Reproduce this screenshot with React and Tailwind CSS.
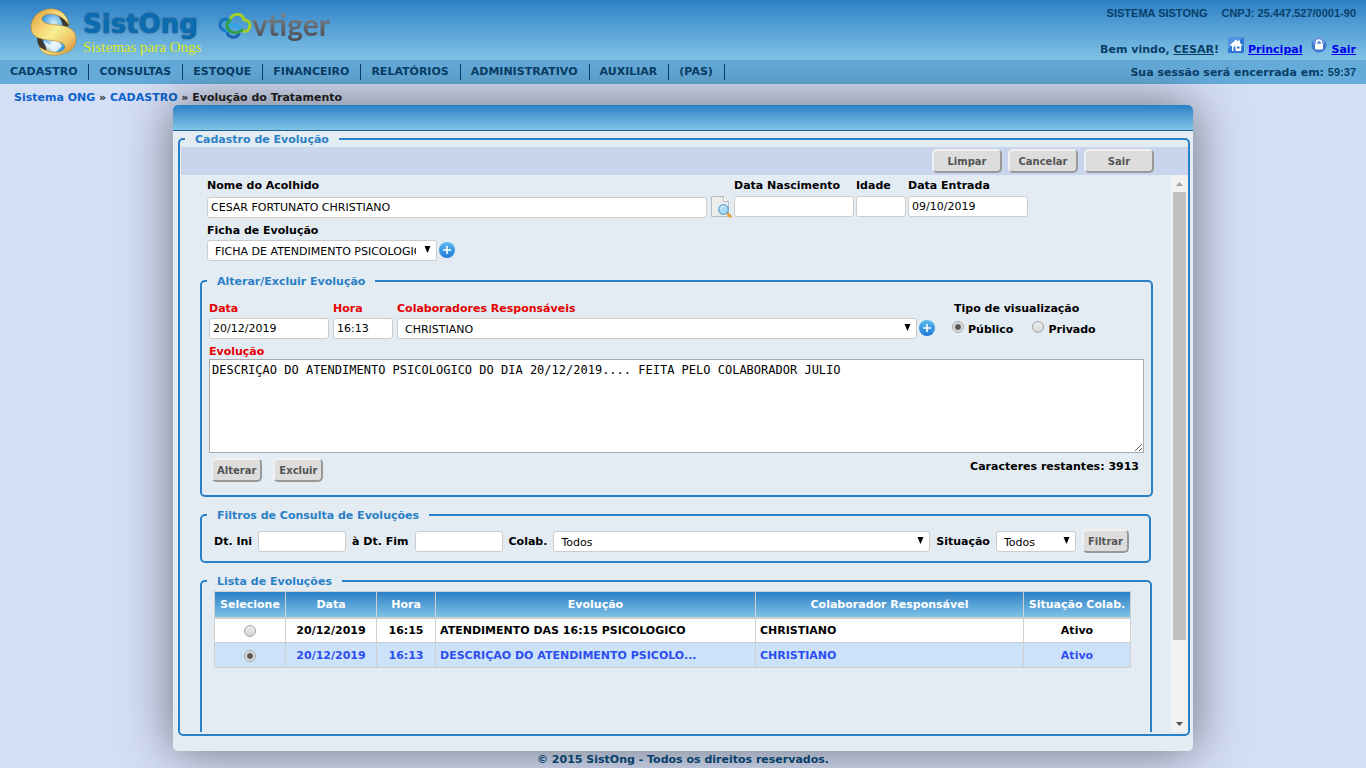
import { useState } from "react";

const MENU = [
  "CADASTRO",
  "CONSULTAS",
  "ESTOQUE",
  "FINANCEIRO",
  "RELATÓRIOS",
  "ADMINISTRATIVO",
  "AUXILIAR",
  "(PAS)",
];

const EVOLUCOES = [
  { id: 1, data: "20/12/2019", hora: "16:15", texto: "ATENDIMENTO DAS 16:15 PSICOLOGICO", colab: "CHRISTIANO", situacao: "Ativo" },
  { id: 2, data: "20/12/2019", hora: "16:13", texto: "DESCRIÇAO DO ATENDIMENTO PSICOLO...", colab: "CHRISTIANO", situacao: "Ativo" },
];

const MAX_CARACTERES = 4000;

const FIELD = "block h-[21px] rounded-[3px] border border-[#ccc] bg-white font-normal text-black outline-none";
const RADIO =
  "block size-3 shrink-0 appearance-none rounded-full border border-[#a5a5a5] bg-linear-to-b from-[#eee] to-[#d6d6d6] checked:bg-[radial-gradient(circle,#555_0,#555_2px,#e6e6e6_4px)]";

function Globe() {
  return (
    <svg className="mt-1" width="48" height="48" viewBox="0 0 48 48" aria-hidden="true">
      <defs>
        <linearGradient id="gold" x1="0" y1="0" x2="1" y2="1">
          <stop offset="0" stopColor="#d99a35" />
          <stop offset=".3" stopColor="#f3cf6c" />
          <stop offset=".5" stopColor="#f8ee93" />
          <stop offset=".75" stopColor="#efc765" />
          <stop offset="1" stopColor="#c98228" />
        </linearGradient>
        <radialGradient id="globe">
          <stop offset="0" stopColor="#d4eefc" />
          <stop offset="1" stopColor="#2c8fd8" />
        </radialGradient>
      </defs>
      <circle cx="24" cy="15" r="13" fill="url(#globe)" />
      <circle cx="23" cy="34" r="13" fill="url(#globe)" />
      <path d="M28 3q10 3 11 15l-6 1q-1-9-8-14z" fill="#3b3733" />
      <path d="M7 30q0 11 11 15l4-3q-9-4-10-12z" fill="#3b3733" />
      <path d="M14 33l6 4 6-7 6 8-6 6-9-1z" fill="#fff" opacity=".75" />
      <path
        d="M39 17C37 4 27 0 18 1 6 3 1 12 1 19c0 9 7 12 17 13 11 1 17 3 17 7 0 6-12 8-26 0 5 11 20 9 29 5 6-3 8-8 8-13 0-10-8-13-19-14-10-1-15-2-15-6 0-6 17-9 27 6z"
        fill="url(#gold)"
        stroke="#b98226"
        strokeWidth=".6"
      />
    </svg>
  );
}

function Cloud() {
  return (
    <svg width="34" height="28" viewBox="0 0 34 28" fill="none" strokeWidth="3" strokeLinecap="round" aria-hidden="true">
      <path d="M12 8C6 5 2 9 2 13c0 4 4 6 7 6" stroke="#1673bd" />
      <path d="M9 19c0 7 9 8 12 3" stroke="#1d62b0" />
      <path d="M9 19c-1-5 5-8 10-5l5 4" stroke="#2ba7ea" />
      <path d="M12 8c2-7 12-8 14 0 6 0 7 5 5 9-2 3-5 3-7 1" stroke="#a5cf28" />
      <path d="M12 8c-4 3-4 9 0 11 4 3 9 2 12-1" stroke="#2fa04d" />
    </svg>
  );
}

function HomeIcon() {
  return (
    <svg width="16" height="16" viewBox="0 0 16 16" aria-hidden="true">
      <rect width="16" height="16" rx="1" fill="#2f78d2" />
      <path d="M0 0h16L0 12z" fill="#6ba5ea" opacity=".6" />
      <path d="M8 2.500 2 8l1 1 1-.5V14h9V8.500l1 .5.500-1L12 6V3.500h-2v1z" fill="#fff" />
      <path d="M5.500 9.500h2V14h-2zM9 9.500h2.500v2H9z" fill="#2f78d2" />
    </svg>
  );
}

function LockIcon() {
  return (
    <svg width="16" height="16" viewBox="0 0 16 16" aria-hidden="true">
      <circle cx="8" cy="8" r="7.500" fill="#3f73cf" />
      <ellipse cx="8" cy="5" rx="6" ry="4.500" fill="#7fa6e6" opacity=".7" />
      <path d="M5.500 8V5.500a2.500 2.500 0 0 1 5 0V8" fill="none" stroke="#fff" strokeWidth="1.500" />
      <rect x="4" y="7" width="8" height="5.500" rx=".8" fill="#fff" />
    </svg>
  );
}

function AddButton({ label }) {
  return (
    <button type="button" aria-label={label} className="mt-[2px] block size-4 shrink-0">
      <svg width="16" height="16" viewBox="0 0 16 16" aria-hidden="true">
        <defs>
          <linearGradient id="add" x1="0" y1="0" x2="0" y2="1">
            <stop offset="0" stopColor="#5bbcf0" />
            <stop offset="1" stopColor="#1f78d6" />
          </linearGradient>
        </defs>
        <circle cx="8" cy="8" r="8" fill="url(#add)" />
        <path d="M8 4v8M4 8h8" stroke="#fff" strokeWidth="1.600" />
      </svg>
    </button>
  );
}

function SearchDocIcon() {
  return (
    <svg width="21" height="22" viewBox="0 0 21 22" aria-hidden="true">
      <path d="M.5.5h12l5 5v15H.5z" fill="#eceded" stroke="#b9bcbe" />
      <path d="M12.500.5v5h5" fill="#fff" stroke="#b9bcbe" />
      <path d="m16 17 3.500 3.500" stroke="#e59a2e" strokeWidth="2.500" strokeLinecap="round" />
      <circle cx="12.500" cy="13.500" r="4.800" fill="#a5dcf8" stroke="#6fa6cc" strokeWidth="1.300" />
      <path d="M9.500 13a3 3 0 0 1 4-2.500" stroke="#fff" fill="none" />
    </svg>
  );
}

function Button({ className, children }) {
  return (
    <button
      type="button"
      className={`h-6 rounded-[5px] border-2 border-t-[#f0f0f0] border-r-[#999] border-b-[#999] border-l-[#f0f0f0] bg-[#ddd] text-[10px] font-bold text-[#555] ${className}`}
    >
      {children}
    </button>
  );
}

function Box({ title, className, children }) {
  return (
    <fieldset className={`min-w-0 rounded-[5px] border-2 border-[#2a80c6] ${className}`}>
      <legend className="ml-[5px] px-[10px] pt-[2px] leading-[14px] text-[#2a80c6]">{title}</legend>
      {children}
    </fieldset>
  );
}

function Select({ id, className, options }) {
  return (
    <div className={`relative ${className}`}>
      <select id={id} className={`${FIELD} w-full appearance-none pt-[3px] pr-5 pl-[7px]`}>
        {options.map((o) => (
          <option key={o}>{o}</option>
        ))}
      </select>
      <svg className="pointer-events-none absolute top-[6px] right-[6px]" width="7" height="7" viewBox="0 0 7 7" aria-hidden="true">
        <path d="M.5 0h6l-3 7z" fill="#000" />
      </svg>
    </div>
  );
}

function Header() {
  return (
    <header className="shrink-0 text-[#083f68]">
      <div className="flex h-[60px] justify-between bg-linear-to-b from-[#2a80c6] to-[#82c4e6] pr-[10px] pl-[30px]">
        <div className="flex">
          <div className="flex pt-1">
            <Globe />
            <div className="w-[121px] pt-1 pl-[5px] whitespace-nowrap">
              <div className="text-[26px] leading-8 text-[#0b6cb1] [text-shadow:0_0_2px_#123c60]">SistOng</div>
              <div className="font-['Liberation_Serif',serif] text-[15px] leading-[14px] font-normal text-[#dfe81c]">Sistemas para Ongs</div>
            </div>
          </div>
          <div className="ml-[19px] flex h-[52px] items-center">
            <Cloud />
            <span className="bg-linear-to-b from-[#8b9299] to-[#3f4449] bg-clip-text pb-1 font-['Lato',sans-serif] text-[30px] leading-9 text-transparent">vtiger</span>
          </div>
        </div>
        <div className="flex flex-col items-end justify-between pt-[6px] pb-[3px]">
          <div className="flex gap-[14px] font-['Liberation_Sans',Arial,sans-serif] leading-[14px]">
            <span>SISTEMA SISTONG</span>
            <span>CNPJ: 25.447.527/0001-90</span>
          </div>
          <div className="flex items-end leading-[14px]">
            <span>
              Bem vindo, <u>CESAR</u>!
            </span>
            <a href="#principal" className="ml-[9px] flex items-end gap-1 text-[#00e] underline">
              <span className="pb-1"><HomeIcon /></span>
              Principal
            </a>
            <a href="#sair" className="ml-[9px] flex items-end gap-1 text-[#00e] underline">
              <span className="pb-1"><LockIcon /></span>
              Sair
            </a>
          </div>
        </div>
      </div>
      <div className="flex h-6 items-center justify-between bg-[#64abda] pr-[10px]">
        <nav className="flex">
          {MENU.map((item) => (
            <a key={item} href="#menu" className="border-r border-[#083f68] pr-[11px] pl-[10px] leading-4">
              {item}
            </a>
          ))}
        </nav>
        <div className="leading-[14px]">
          Sua sessão será encerrada em: <span className="font-['Liberation_Sans',Arial,sans-serif]">59:37</span>
        </div>
      </div>
    </header>
  );
}

function DadosAcolhido() {
  return (
    <div className="pt-[3px] pl-[26px]">
      <div className="flex">
        <div className="w-[500px]">
          <label htmlFor="nome" className="block h-[19px] leading-4">Nome do Acolhido</label>
          <input id="nome" defaultValue="CESAR FORTUNATO CHRISTIANO" className={`${FIELD} w-full px-[3px]`} />
        </div>
        <button type="button" aria-label="Pesquisar" className="mr-[2px] ml-1 self-end">
          <SearchDocIcon />
        </button>
        <div className="flex gap-[2px]">
          <div className="w-[120px]">
            <label htmlFor="nascimento" className="block h-[18px] leading-4 whitespace-nowrap">Data Nascimento</label>
            <input id="nascimento" className={`${FIELD} w-full px-[3px]`} />
          </div>
          <div className="w-[50px]">
            <label htmlFor="idade" className="block h-[18px] leading-4">Idade</label>
            <input id="idade" className={`${FIELD} w-full px-[3px]`} />
          </div>
          <div className="w-[120px]">
            <label htmlFor="entrada" className="block h-[18px] leading-4">Data Entrada</label>
            <input id="entrada" defaultValue="09/10/2019" className={`${FIELD} w-full px-[3px]`} />
          </div>
        </div>
      </div>
      <label htmlFor="ficha" className="mt-[5px] block h-[17px] leading-4">Ficha de Evolução</label>
      <div className="flex items-start gap-[2px]">
        <Select id="ficha" className="w-[230px]" options={["FICHA DE ATENDIMENTO PSICOLOGICO"]} />
        <AddButton label="Adicionar ficha" />
      </div>
    </div>
  );
}

function AlterarEvolucao() {
  const [texto, setTexto] = useState(
    "DESCRIÇAO DO ATENDIMENTO PSICOLOGICO DO DIA 20/12/2019.... FEITA PELO COLABORADOR JULIO"
  );

  return (
    <Box title="Alterar/Excluir Evolução" className="mt-3 mr-[18px] ml-[19px]">
      <div className="px-[7px] pt-3 pb-[13px]">
        <div className="flex">
          <div className="w-[120px]">
            <label htmlFor="data" className="block h-[17px] leading-4 text-[#e60000]">Data</label>
            <input id="data" defaultValue="20/12/2019" className={`${FIELD} w-full px-[3px]`} />
          </div>
          <div className="ml-1 w-[60px]">
            <label htmlFor="hora" className="block h-[17px] leading-4 text-[#e60000]">Hora</label>
            <input id="hora" defaultValue="16:13" className={`${FIELD} w-full px-[3px]`} />
          </div>
          <div className="ml-1 min-w-0 flex-1">
            <label htmlFor="colaborador" className="block h-[17px] leading-4 text-[#e60000]">Colaboradores Responsáveis</label>
            <div className="flex items-start gap-[2px]">
              <Select id="colaborador" className="flex-1" options={["CHRISTIANO"]} />
              <AddButton label="Adicionar colaborador" />
            </div>
          </div>
          <div role="radiogroup" aria-labelledby="tipo" className="ml-[17px] w-[192px]">
            <div id="tipo" className="h-[17px] pl-[2px] leading-4">Tipo de visualização</div>
            <div className="flex gap-[19px] pt-[3px]">
              <label className="flex gap-1 leading-[18px]">
                <input type="radio" name="tipo" defaultChecked className={RADIO} />
                Público
              </label>
              <label className="flex gap-1 leading-[18px]">
                <input type="radio" name="tipo" className={RADIO} />
                Privado
              </label>
            </div>
          </div>
        </div>
        <label htmlFor="texto" className="mt-[5px] block h-[15px] leading-4 text-[#e60000]">Evolução</label>
        <textarea
          id="texto"
          value={texto}
          onChange={(e) => setTexto(e.target.value)}
          className="block h-[94px] w-full border border-[#a9a9a9] bg-white px-[2px] py-[3px] font-['DejaVu_Sans_Mono',monospace] text-[12px] leading-[14px] font-normal text-black outline-none"
        />
        <div className="flex items-start justify-between pt-[5px] pr-[5px] pl-[2px]">
          <div className="flex gap-[11px]">
            <Button className="px-1">Alterar</Button>
            <Button className="px-1">Excluir</Button>
          </div>
          <span className="pt-[2px] leading-[14px]">Caracteres restantes: {MAX_CARACTERES - texto.length}</span>
        </div>
      </div>
    </Box>
  );
}

function Filtros() {
  return (
    <Box title="Filtros de Consulta de Evoluções" className="mt-[10px] mr-5 ml-[19px]">
      <div className="flex items-center gap-[6px] pt-[6px] pr-5 pb-2 pl-3 whitespace-nowrap [&_label]:pt-[2px]">
        <label htmlFor="ini">Dt. Ini</label>
        <input id="ini" className={`${FIELD} w-[88px] px-[3px]`} />
        <label htmlFor="fim">à Dt. Fim</label>
        <input id="fim" className={`${FIELD} w-[88px] px-[3px]`} />
        <label htmlFor="colab">Colab.</label>
        <Select id="colab" className="flex-1" options={["Todos"]} />
        <label htmlFor="situacao">Situação</label>
        <Select id="situacao" className="w-20" options={["Todos", "Ativo", "Inativo"]} />
        <Button className="px-1">Filtrar</Button>
      </div>
    </Box>
  );
}

function Lista() {
  const [selecionada, setSelecionada] = useState(2);

  return (
    <Box title="Lista de Evoluções" className="mt-[10px] mr-[19px] ml-[19px] h-[240px]">
      <div className="pt-[2px] pr-[19px] pl-3">
        <table className="w-full table-fixed border-collapse [&_td]:border [&_td]:border-[#d0d0d0] [&_td]:px-1 [&_td]:pt-[2px] [&_th]:border [&_th]:border-b-2 [&_th]:border-[#d0d0d0] [&_th]:pt-[2px]">
          <colgroup>
            <col className="w-[71px]" />
            <col className="w-[91px]" />
            <col className="w-[59px]" />
            <col />
            <col className="w-[268px]" />
            <col className="w-[107px]" />
          </colgroup>
          <thead>
            <tr className="h-[26px] bg-linear-to-b from-[#2a80c6] to-[#82c4e6] whitespace-nowrap text-white">
              <th>Selecione</th>
              <th>Data</th>
              <th>Hora</th>
              <th>Evolução</th>
              <th>Colaborador Responsável</th>
              <th>Situação Colab.</th>
            </tr>
          </thead>
          <tbody>
            {EVOLUCOES.map((ev) => (
              <tr
                key={ev.id}
                className={ev.id === selecionada ? "h-[25px] bg-[#cce2f9] text-[#2c4ef0]" : "h-[25px] bg-white"}
              >
                <td>
                  <input
                    type="radio"
                    name="evolucao"
                    aria-label={ev.texto}
                    checked={ev.id === selecionada}
                    onChange={() => setSelecionada(ev.id)}
                    className={`${RADIO} mx-auto`}
                  />
                </td>
                <td className="text-center">{ev.data}</td>
                <td className="text-center">{ev.hora}</td>
                <td>{ev.texto}</td>
                <td>{ev.colab}</td>
                <td className="text-center">{ev.situacao}</td>
              </tr>
            ))}
          </tbody>
        </table>
      </div>
    </Box>
  );
}

function ScrollBar() {
  return (
    <div className="flex w-[17px] shrink-0 flex-col items-center bg-[#f1f1f1]" aria-hidden="true">
      <svg width="17" height="17" viewBox="0 0 17 17">
        <path d="M5 11h7L8.500 7z" fill="#a3a3a3" />
      </svg>
      <div className="flex w-[13px] flex-1 flex-col">
        <div className="h-6/7 bg-[#c1c1c1]" />
      </div>
      <svg width="17" height="17" viewBox="0 0 17 17">
        <path d="M5 7h7l-3.500 4z" fill="#505050" />
      </svg>
    </div>
  );
}

export default function App() {
  return (
    <div className="flex h-screen flex-col bg-[#d4def5] font-['DejaVu_Sans',Verdana,sans-serif] text-[11px] font-bold text-black">
      <Header />
      <div className="h-[21px] shrink-0 pt-[7px] pl-[14px] leading-[14px] text-[#222]">
        <a href="#ong" className="text-[#0b63ce]">Sistema ONG</a> » <a href="#cadastro" className="text-[#0b63ce]">CADASTRO</a> » Evolução do Tratamento
      </div>
      <main className="mx-auto flex min-h-0 w-full max-w-[1020px] flex-1 flex-col rounded-[5px] bg-[#e4ecf3] shadow-[0_0_50px_rgba(0,0,0,0.5)]">
        <div className="h-[26px] shrink-0 rounded-t-[5px] border-b border-[#1c5e94] bg-linear-to-b from-[#2a80c6] to-[#82c4e6]" />
        <fieldset className="mr-[3px] mb-[15px] ml-[5px] flex min-h-0 min-w-0 flex-1 flex-col rounded-[5px] border-2 border-[#2a80c6] pl-px">
          <legend className="ml-1 px-[10px] pt-[2px] leading-[14px] text-[#2a80c6]">Cadastro de Evolução</legend>
          <div className="flex h-7 shrink-0 items-center justify-end gap-[6px] bg-[#c9d5ec] pr-[34px]">
            <Button className="w-[70px]">Limpar</Button>
            <Button className="w-[70px]">Cancelar</Button>
            <Button className="w-[70px]">Sair</Button>
          </div>
          <div className="mb-[2px] flex min-h-0 flex-1">
            <div className="min-w-0 flex-1 overflow-y-auto [scrollbar-width:none]">
              <DadosAcolhido />
              <AlterarEvolucao />
              <Filtros />
              <Lista />
            </div>
            <ScrollBar />
          </div>
        </fieldset>
      </main>
      <footer className="h-[17px] shrink-0 text-center leading-[17px] text-[#083f68]">
        © 2015 SistOng - Todos os direitos reservados.
      </footer>
    </div>
  );
}
